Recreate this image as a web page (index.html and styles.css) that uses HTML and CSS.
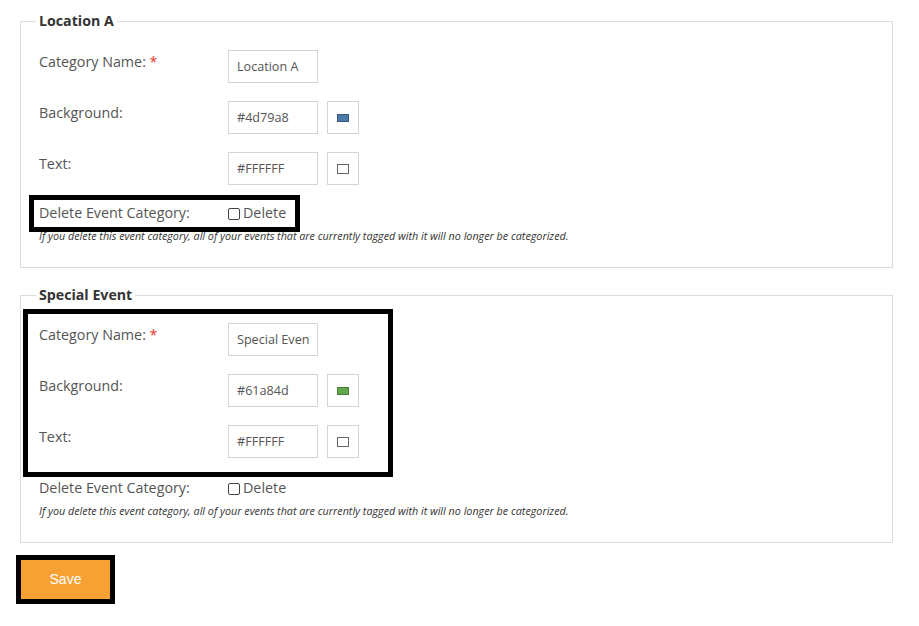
FILE: index.html
```html
<!DOCTYPE html>
<html>
<head>
<meta charset="utf-8">
<link rel="stylesheet" href="styles.css">
</head>
<body>
<div class="page">
  <fieldset class="cat">
    <legend>Location A</legend>
    <div class="row">
      <label class="lbl">Category Name: <span class="req">*</span></label>
      <input class="txt" type="text" value="Location A">
    </div>
    <div class="row">
      <label class="lbl">Background:</label>
      <input class="txt" type="text" value="#4d79a8">
      <span class="swatch-btn"><span class="swatch" style="background:#4d79a8"></span></span>
    </div>
    <div class="row">
      <label class="lbl">Text:</label>
      <input class="txt" type="text" value="#FFFFFF">
      <span class="swatch-btn"><span class="swatch swatch-light" style="background:#FFFFFF"></span></span>
    </div>
    <div class="annot annot-del">
      <div class="del-row">
        <span class="lbl">Delete Event Category:</span>
        <label class="chk"><span class="box"></span>Delete</label>
      </div>
    </div>
    <p class="note">If you delete this event category, all of your events that are currently tagged with it will no longer be categorized.</p>
  </fieldset>

  <fieldset class="cat cat-second">
    <legend>Special Event</legend>
    <div class="annot annot-rows">
      <div class="row">
        <label class="lbl">Category Name: <span class="req">*</span></label>
        <input class="txt" type="text" value="Special Event">
      </div>
      <div class="row">
        <label class="lbl">Background:</label>
        <input class="txt" type="text" value="#61a84d">
        <span class="swatch-btn"><span class="swatch" style="background:#61a84d"></span></span>
      </div>
      <div class="row">
        <label class="lbl">Text:</label>
        <input class="txt" type="text" value="#FFFFFF">
        <span class="swatch-btn"><span class="swatch swatch-light" style="background:#FFFFFF"></span></span>
      </div>
    </div>
    <div class="del-row del-plain">
      <span class="lbl">Delete Event Category:</span>
      <label class="chk"><span class="box"></span>Delete</label>
    </div>
    <p class="note">If you delete this event category, all of your events that are currently tagged with it will no longer be categorized.</p>
  </fieldset>

  <div class="annot annot-save">
    <button class="save" type="button">Save</button>
  </div>
</div>
</body>
</html>
```

FILE: styles.css
```css
* { box-sizing: border-box; }

html, body {
  margin: 0;
  padding: 0;
  background: #fff;
}

body {
  font-family: "Open Sans", "Liberation Sans", sans-serif;
  color: #555;
}

.page {
  padding: 11px 26px 0 20px;
}

.cat {
  margin: 0;
  border: 1px solid #dcdcdc;
  padding: 19px 18px 24px 18px;
  min-width: 0;
}

.cat-second {
  margin-top: 17px;
}

.cat legend {
  font-size: 14.2px;
  font-weight: 700;
  line-height: 20px;
  color: #333;
  padding: 0 3px;
  margin-left: -3px;
}

.row {
  display: flex;
  align-items: flex-start;
  height: 33px;
}

.row + .row {
  margin-top: 18px;
}

.lbl {
  display: block;
  width: 189px;
  flex: 0 0 189px;
  font-size: 14.3px;
  line-height: 20px;
  padding-top: 2px;
  color: #555;
}

.req {
  color: #e8342c;
}

.txt {
  width: 90px;
  height: 33px;
  margin: 0;
  border: 1px solid #d4d4d4;
  border-radius: 0;
  padding: 0 8px;
  font-family: "Open Sans", "Liberation Sans", sans-serif;
  font-size: 12.6px;
  color: #555;
  background: #fff;
  outline: none;
}

.swatch-btn {
  display: flex;
  align-items: center;
  justify-content: center;
  width: 32px;
  height: 33px;
  margin-left: 9px;
  border: 1px solid #d4d4d4;
  background: #fff;
}

.swatch {
  display: block;
  width: 12px;
  height: 8px;
  border: 1px solid rgba(0, 0, 0, 0.25);
}

.swatch-light {
  height: 10px;
  border-color: #666;
}

.del-row {
  display: flex;
  align-items: center;
  height: 20px;
}

.del-row .lbl {
  padding-top: 0;
}

.del-plain {
  margin-top: 20px;
}

.chk {
  display: flex;
  align-items: center;
  font-size: 14.3px;
  line-height: 20px;
  color: #555;
}

.chk .box {
  display: block;
  width: 12px;
  height: 12px;
  margin-top: 2px;
  margin-right: 3px;
  border: 1px solid #444;
  border-radius: 2px;
  background: #fff;
}

.note {
  margin: 6px 0 0 0;
  font-size: 10.75px;
  line-height: 14px;
  font-style: italic;
  color: #333;
}

.annot {
  border: 5px solid #000;
}

.annot-del {
  width: 271px;
  margin: 10px 0 -9px -10px;
  padding: 3px 0 4px 5px;
}

.annot-rows {
  width: 370px;
  margin: -15px 0 -19px -16px;
  padding: 9px 0 14px 11px;
}

.annot-save {
  display: inline-block;
  margin: 12px 0 0 -4px;
  line-height: 0;
}

.save {
  width: 89px;
  height: 39px;
  margin: 0;
  border: 0;
  border-radius: 0;
  background: #f7a033;
  color: #fff;
  font-family: "Liberation Sans", Arial, sans-serif;
  font-size: 14px;
  line-height: 39px;
  padding: 0;
}
```
